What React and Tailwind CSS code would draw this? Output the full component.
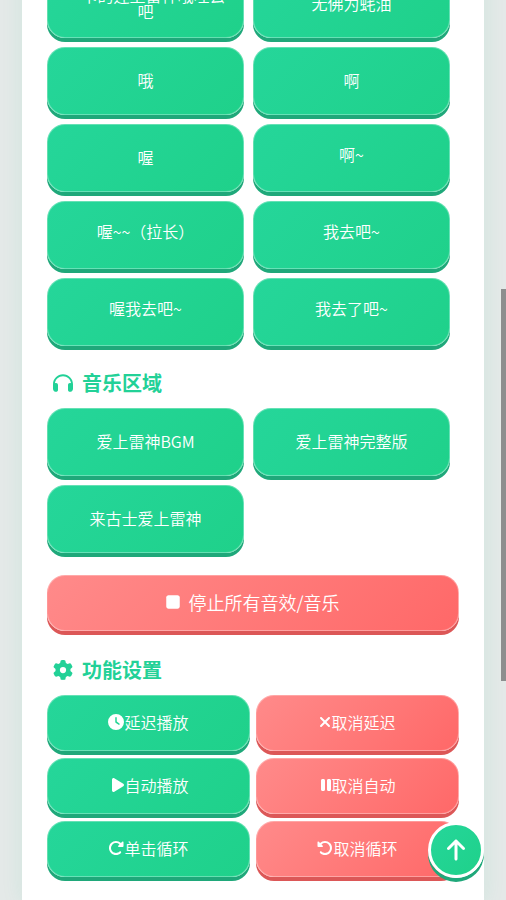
import {
  FaArrowUp,
  FaClock,
  FaGear,
  FaHeadphones,
  FaPause,
  FaPlay,
  FaRotateLeft,
  FaRotateRight,
  FaStop,
  FaXmark,
} from "react-icons/fa6";

const voices = [
  "一卡的连上雷神哦哇去吧",
  "无佛为蚝油",
  "哦",
  "啊",
  "喔",
  "啊~",
  "喔~~（拉长）",
  "我去吧~",
  "喔我去吧~",
  "我去了吧~",
];

const music = ["爱上雷神BGM", "爱上雷神完整版", "来古士爱上雷神"];

const settings = [
  { label: "延迟播放", Icon: FaClock, width: "w-4", tone: "green" },
  { label: "取消延迟", Icon: FaXmark, width: "w-3", tone: "red" },
  { label: "自动播放", Icon: FaPlay, width: "w-4", tone: "green" },
  { label: "取消自动", Icon: FaPause, width: "w-3", tone: "red" },
  { label: "单击循环", Icon: FaRotateRight, width: "w-4", tone: "green" },
  { label: "取消循环", Icon: FaRotateLeft, width: "w-4", tone: "red" },
];

const tones = {
  green:
    "bg-linear-135 from-[#25d69a] to-[#1fd18a] shadow-[0_4px_0_#1fa87a]",
  red: "bg-linear-135 from-[#ff8a8a] to-[#ff6868] shadow-[0_4px_0_#dc5757]",
};

function Button({ tone, className, children }) {
  return (
    <button
      type="button"
      className={`flex items-center justify-center rounded-[18px] border border-white/30 pb-0.5 font-[350] text-white ${tones[tone]} ${className}`}
    >
      {children}
    </button>
  );
}

function SoundGrid({ items }) {
  return (
    <div className="grid grid-cols-2 gap-[9px] pr-[9px]">
      {items.map((label) => (
        <Button
          key={label}
          tone="green"
          className={`h-17 px-4 text-base leading-4 ${label.includes("~") ? "pb-2" : ""}`}
        >
          {label}
        </Button>
      ))}
    </div>
  );
}

function Heading({ Icon, children }) {
  return (
    <h2 className="flex h-8 items-center gap-[9px] px-1.5 text-xl font-bold text-[#22d197]">
      <Icon className="size-5" />
      {children}
    </h2>
  );
}

export default function App() {
  return (
    <div className="min-h-screen overflow-hidden bg-[#e4e9e8] px-[22px] font-['Noto_Sans_CJK_SC','Noto_Sans',sans-serif]">
      <main className="min-h-screen bg-white px-[25px] pb-6 shadow-[0_0_20px_rgba(32,209,139,0.1)]">
        <section className="-mt-[30px]">
          <SoundGrid items={voices} />
        </section>

        <section className="flex flex-col gap-[9px] pt-[21px]">
          <Heading Icon={FaHeadphones}>音乐区域</Heading>
          <SoundGrid items={music} />
        </section>

        <div className="pt-[22px]">
          <Button tone="red" className="h-14 w-full gap-2 text-lg">
            <FaStop className="h-[18px] w-3.5" />
            停止所有音效/音乐
          </Button>
        </div>

        <section className="flex flex-col gap-[9px] pt-[23px]">
          <Heading Icon={FaGear}>功能设置</Heading>
          <div className="grid grid-cols-2 gap-x-1.5 gap-y-[7px]">
            {settings.map(({ label, Icon, width, tone }) => (
              <Button key={label} tone={tone} className="h-14 text-base">
                <Icon
                  className={`h-4 ${width}`}
                  preserveAspectRatio="xMaxYMid meet"
                />
                {label}
              </Button>
            ))}
          </div>
        </section>
      </main>

      <button
        type="button"
        aria-label="返回顶部"
        className="fixed right-[22px] bottom-[22px] flex size-14 items-center justify-center rounded-full border-[3px] border-white bg-linear-135 from-[#25d69a] to-[#1fd18a] text-white shadow-[0_4px_0_#1fa87a]"
      >
        <FaArrowUp className="size-6" />
      </button>
      <div className="fixed top-[289px] right-0 h-[392px] w-[5px] bg-[#8c8e8e]" />
    </div>
  );
}
